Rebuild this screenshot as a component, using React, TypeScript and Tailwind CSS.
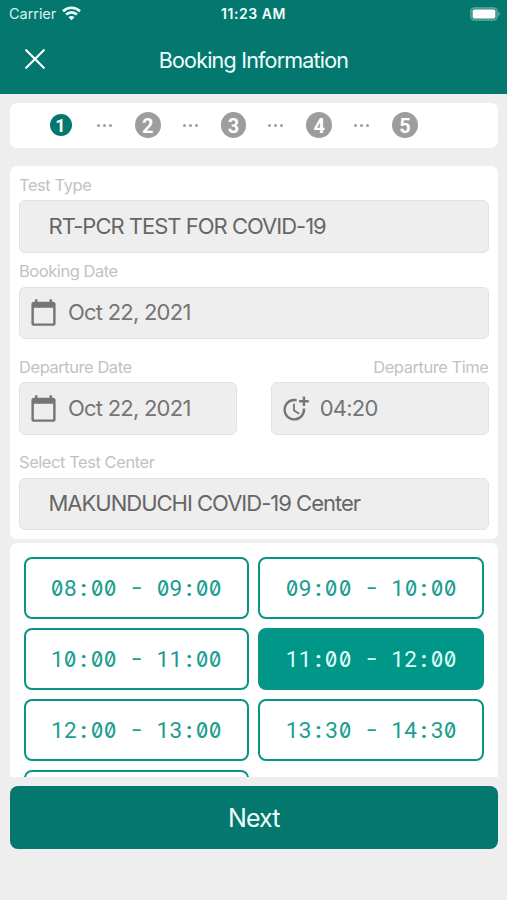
import type { ReactNode } from 'react';
import clsx from 'clsx';
import { MdCalendarToday, MdMoreTime } from 'react-icons/md';

const slots = [
  '08:00 - 09:00',
  '09:00 - 10:00',
  '10:00 - 11:00',
  '11:00 - 12:00',
  '12:00 - 13:00',
  '13:30 - 14:30'
];

const selectedSlot = '11:00 - 12:00';

function StatusBar() {
  return (
    <div className="flex h-[27px] items-center justify-between pl-[9px] pr-[5px]">
      <div className="flex w-40 items-center gap-[6px] text-[14.5px] tracking-[-0.05px] text-[#d5f3ee]">
        <span>Carrier</span>
        <svg width="19" height="15" viewBox="0 0 19 15" fill="none" stroke="#effffc" strokeWidth="2.7">
          <path d="M1 5.2C5.8.6 13.2.6 18 5.2" />
          <path d="M4.1 8.5C7.2 5.6 11.8 5.6 14.9 8.5" />
          <path d="M9.5 14.3 6.5 11.2C8.1 9.7 10.9 9.7 12.5 11.2Z" fill="#effffc" stroke="none" />
        </svg>
      </div>
      <div className="-ml-[4px] text-[14px] font-semibold tracking-[0.55px] text-[#effffc]">11:23 AM</div>
      <div className="flex w-40 justify-end pr-[1px]">
        <svg width="31" height="14" viewBox="0 0 31 14">
          <rect x=".8" y=".8" width="26.4" height="12.4" rx="3.6" fill="#318f86" stroke="#5eaca3" strokeWidth="1.2" />
          <rect x="2.7" y="2.5" width="22.6" height="9" rx="1.8" fill="#fff" />
          <path d="M28.4 4.6c1.9.7 1.9 4.1 0 4.8Z" fill="#5eaca3" />
        </svg>
      </div>
    </div>
  );
}

function Header() {
  return (
    <header className="h-[93.5px] bg-[#04786f]">
      <StatusBar />
      <div className="grid h-[66px] grid-cols-[70px_1fr_70px] items-center">
        <button className="flex h-full items-center pb-[3px] pl-[25px]" aria-label="Close">
          <svg width="20" height="20" viewBox="0 0 20 20" fill="none" stroke="#fff" strokeWidth="2.1" strokeLinecap="round">
            <path d="M1.2 1.2 18.8 18.8M18.8 1.2 1.2 18.8" />
          </svg>
        </button>
        <h1 className="text-center text-[21.5px] tracking-[-0.8px] text-[#effffc]">Booking Information</h1>
      </div>
    </header>
  );
}

function Dots() {
  return (
    <div className="flex w-[60px] justify-center gap-[3px] pr-[1px] pt-[1px]">
      <i className="size-[3px] rounded-full bg-[#9d9d9d]" />
      <i className="size-[3px] rounded-full bg-[#9d9d9d]" />
      <i className="size-[3px] rounded-full bg-[#9d9d9d]" />
    </div>
  );
}

function Steps() {
  return (
    <div className="mt-[9px] flex h-[45.5px] items-center rounded-[7px] bg-white pl-[39.5px] font-[Roboto] text-[20px] font-bold text-white">
      <span className="mr-[3.5px] flex size-[22px] items-center justify-center rounded-full bg-[#04786f] text-[18px]">1</span>
      {[2, 3, 4, 5].map((step) => (
        <div key={step} className="flex items-center">
          <Dots />
          <span className="flex size-[25.7px] items-center justify-center rounded-full bg-[#9d9d9d] pt-px">{step}</span>
        </div>
      ))}
    </div>
  );
}

interface FieldProps {
  label: string;
  value: string;
  icon?: ReactNode;
  alignRight?: boolean;
}

function Field({ label, value, icon, alignRight }: FieldProps) {
  return (
    <div>
      <div className={clsx('flex h-[34px] items-center pt-[4px] text-[16.5px] tracking-[-0.45px] text-[#c2c2c2]', alignRight && 'justify-end')}>
        {label}
      </div>
      <div
        className={clsx(
          'flex h-[52.5px] items-center rounded-[6px] border border-[#e1e1e1] bg-[#eee] text-[22px]',
          icon ? 'gap-[10px] pl-[9px] tracking-[-0.77px] text-[#757575]' : 'pl-[28.5px] tracking-[-1px] text-[#666]'
        )}
      >
        {icon}
        <span>{value}</span>
      </div>
    </div>
  );
}

// Every character sits in a cell of equal width, zeros are slashed.
function SlotText({ text }: { text: string }) {
  return (
    <span className="flex pt-[2px] font-[Roboto] text-[22.5px]">
      {text.split('').map((char, i) => (
        <span
          key={i}
          className={clsx(
            'flex w-[13.2px] justify-center whitespace-pre',
            char === '-' && '-mt-px scale-x-[1.5]',
            char === ':' && 'font-bold'
          )}
        >
          {char === '0' ? (
            <span className="inline-block scale-x-[0.86] font-[Inter] text-[22px] font-medium [font-feature-settings:'zero']">0</span>
          ) : (
            char
          )}
        </span>
      ))}
    </span>
  );
}

export default function App() {
  return (
    <div className="flex h-[900px] w-[507px] flex-col overflow-hidden bg-[#eee] font-[Inter,sans-serif]">
      <Header />
      <main className="flex flex-col pl-[10px] pr-[9.5px]">
        <Steps />

        <section className="mt-[18px] flex h-[372.5px] flex-col rounded-[7px] bg-white px-[9px]">
          <Field label="Test Type" value="RT-PCR TEST FOR COVID-19" />
          <Field label="Booking Date" value="Oct 22, 2021" icon={<MdCalendarToday size={29} />} />
          <div className="mt-[9px] grid grid-cols-2 gap-[34px]">
            <Field label="Departure Date" value="Oct 22, 2021" icon={<MdCalendarToday size={29} />} />
            <Field label="Departure Time" value="04:20" icon={<MdMoreTime size={29} />} alignRight />
          </div>
          <div className="mt-[9px]">
            <Field label="Select Test Center" value="MAKUNDUCHI COVID-19 Center" />
          </div>
        </section>

        <section className="mt-[4.5px] h-[234px] overflow-hidden rounded-t-[7px] bg-white px-[13.5px] pt-[13.5px]">
          <div className="grid grid-cols-2 gap-x-[9px] gap-y-[9.3px]">
            {slots.map((slot) => (
              <button
                key={slot}
                className={clsx(
                  'flex h-[62px] items-center justify-center rounded-[8px] border-2 border-[#079686]',
                  slot === selectedSlot ? 'bg-[#009688] text-[#dcfffa]' : 'bg-white text-[#1b9e90]'
                )}
              >
                <SlotText text={slot} />
              </button>
            ))}
            {/* top edge of the next row, peeking above the fold */}
            <div className="h-[62px] rounded-[8px] border-2 border-[#079686]" />
          </div>
        </section>

        <button className="mt-[9px] h-[63px] rounded-[8px] bg-[#04786f] pt-[2px] text-[25px] tracking-[-0.9px] text-[#effffc]">
          Next
        </button>
      </main>
    </div>
  );
}
